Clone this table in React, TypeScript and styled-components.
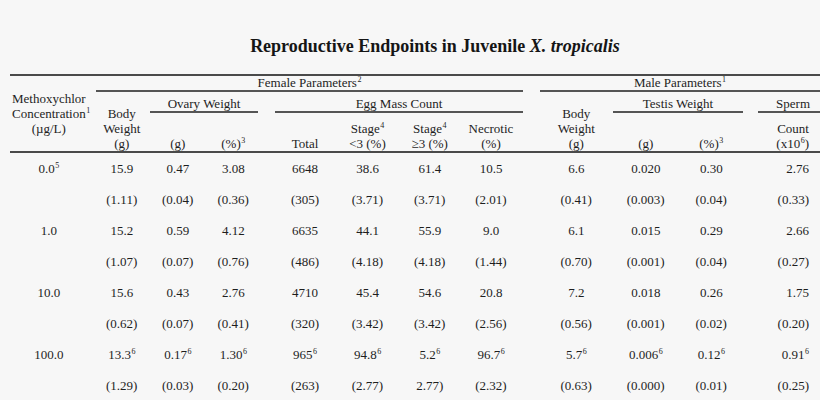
import React from "react";
import styled, { createGlobalStyle } from "styled-components";

const GlobalStyle = createGlobalStyle`
  html, body {
    margin: 0;
    padding: 0;
    background: #f7f7f7;
    overflow: hidden;
  }
  body {
    font-family: "Liberation Serif", "Times New Roman", serif;
    color: #1e1e1e;
  }
`;

const TRACKS =
  "75.5px 64.5px 55.5px 63.5px 67px 63px 61.5px 73px 77.5px 67.5px 73.5px 68px";

// per-column horizontal shift of the centred text (px); last column is right-aligned
const SHIFTS = [1, 4, 0, -4, 2.5, 0, 0, -6, 4, 1, -4, 0];

const Page = styled.div`
  width: 820px;
  height: 400px;
  padding-top: 35px;
  box-sizing: border-box;
`;

const Title = styled.h1`
  margin: 0;
  padding-left: 50px;
  font-size: 18px;
  line-height: 22px;
  font-weight: bold;
  text-align: center;
  color: #151515;
`;

const Italic = styled.i`
  font-style: italic;
`;

const Table = styled.div`
  margin: 17px 0 0 10px;
  font-size: 13px;
`;

const HeaderGrid = styled.div`
  display: grid;
  grid-template-columns: ${TRACKS};
  grid-template-rows: 16px 21px 38px;
  border-top: 2px solid #4a4a4a;
  border-bottom: 2px solid #4a4a4a;
`;

const Sup = styled.sup`
  font-size: 8px;
  line-height: 0;
  vertical-align: 5px;
  margin-left: 0.5px;
`;

const Concentration = styled.div`
  grid-column: 1;
  grid-row: 1 / 4;
  align-self: center;
  text-align: center;
  line-height: 15px;
  padding-left: 2px;
`;

const GroupHead = styled.div<{
  $col: string;
  $row: number;
  $ml?: number;
  $mr?: number;
  $right?: boolean;
}>`
  grid-column: ${(p) => p.$col};
  grid-row: ${(p) => p.$row};
  align-self: end;
  margin-left: ${(p) => p.$ml ?? 0}px;
  margin-right: ${(p) => p.$mr ?? 0}px;
  line-height: 14px;
  height: 14px;
  border-bottom: 2px solid #555;
  text-align: ${(p) => (p.$right ? "right" : "center")};
  padding-right: ${(p) => (p.$right ? 10 : 0)}px;
  white-space: nowrap;
`;

const SubHead = styled.div<{ $col: number; $span?: boolean; $shift: number; $right?: boolean }>`
  grid-column: ${(p) => p.$col};
  grid-row: ${(p) => (p.$span ? "2 / 4" : "3")};
  align-self: end;
  line-height: 15px;
  white-space: nowrap;
  text-align: ${(p) => (p.$right ? "right" : "center")};
  padding-left: ${(p) => (p.$shift > 0 ? p.$shift * 2 : 0)}px;
  padding-right: ${(p) => (p.$right ? 11 : p.$shift < 0 ? -p.$shift * 2 : 0)}px;
`;

const BodyGrid = styled.div`
  display: grid;
  grid-template-columns: ${TRACKS};
  grid-auto-rows: 31px;
`;

const Cell = styled.div<{ $shift: number; $right?: boolean }>`
  line-height: 31px;
  white-space: nowrap;
  text-align: ${(p) => (p.$right ? "right" : "center")};
  padding-left: ${(p) => (p.$shift > 0 ? p.$shift * 2 : 0)}px;
  padding-right: ${(p) => (p.$right ? 11 : p.$shift < 0 ? -p.$shift * 2 : 0)}px;
`;

type Val = string | [string, string];

const ROWS: Val[][] = [
  [["0.0", "5"], "15.9", "0.47", "3.08", "6648", "38.6", "61.4", "10.5", "6.6", "0.020", "0.30", "2.76"],
  ["", "(1.11)", "(0.04)", "(0.36)", "(305)", "(3.71)", "(3.71)", "(2.01)", "(0.41)", "(0.003)", "(0.04)", "(0.33)"],
  ["1.0", "15.2", "0.59", "4.12", "6635", "44.1", "55.9", "9.0", "6.1", "0.015", "0.29", "2.66"],
  ["", "(1.07)", "(0.07)", "(0.76)", "(486)", "(4.18)", "(4.18)", "(1.44)", "(0.70)", "(0.001)", "(0.04)", "(0.27)"],
  ["10.0", "15.6", "0.43", "2.76", "4710", "45.4", "54.6", "20.8", "7.2", "0.018", "0.26", "1.75"],
  ["", "(0.62)", "(0.07)", "(0.41)", "(320)", "(3.42)", "(3.42)", "(2.56)", "(0.56)", "(0.001)", "(0.02)", "(0.20)"],
  [
    "100.0",
    ["13.3", "6"],
    ["0.17", "6"],
    ["1.30", "6"],
    ["965", "6"],
    ["94.8", "6"],
    ["5.2", "6"],
    ["96.7", "6"],
    ["5.7", "6"],
    ["0.006", "6"],
    ["0.12", "6"],
    ["0.91", "6"],
  ],
  ["", "(1.29)", "(0.03)", "(0.20)", "(263)", "(2.77)", "2.77)", "(2.32)", "(0.63)", "(0.000)", "(0.01)", "(0.25)"],
];

const renderVal = (v: Val) =>
  Array.isArray(v) ? (
    <>
      {v[0]}
      <Sup>{v[1]}</Sup>
    </>
  ) : (
    v
  );

type Sub = { col: number; lines: React.ReactNode[]; span?: boolean };

const SUBS: Sub[] = [
  { col: 2, span: true, lines: ["Body", "Weight", "(g)"] },
  { col: 3, lines: ["(g)"] },
  { col: 4, lines: [<>(%)<Sup>3</Sup></>] },
  { col: 5, lines: ["Total"] },
  { col: 6, lines: [<>Stage<Sup>4</Sup></>, "<3 (%)"] },
  { col: 7, lines: [<>Stage<Sup>4</Sup></>, "≥3 (%)"] },
  { col: 8, lines: ["Necrotic", "(%)"] },
  { col: 9, span: true, lines: ["Body", "Weight", "(g)"] },
  { col: 10, lines: ["(g)"] },
  { col: 11, lines: [<>(%)<Sup>3</Sup></>] },
  { col: 12, lines: ["Count", <>(x10<Sup>6</Sup>)</>] },
];

const Line = styled.div``;

export default function App() {
  return (
    <>
      <GlobalStyle />
      <Page>
        <Title>
          Reproductive Endpoints in Juvenile <Italic>X. tropicalis</Italic>
        </Title>
        <Table>
          <HeaderGrid>
            <Concentration>
              <Line>Methoxychlor</Line>
              <Line>
                Concentration<Sup>1</Sup>
              </Line>
              <Line>(µg/L)</Line>
            </Concentration>
            <GroupHead $col="2 / 9" $row={1} $ml={10.5} $mr={10.5}>
              Female Parameters<Sup>2</Sup>
            </GroupHead>
            <GroupHead $col="9 / 13" $row={1} $ml={6.5}>
              Male Parameters<Sup>1</Sup>
            </GroupHead>
            <GroupHead $col="3 / 5" $row={2} $mr={11}>
              Ovary Weight
            </GroupHead>
            <GroupHead $col="5 / 9" $row={2} $ml={6} $mr={10.5}>
              Egg Mass Count
            </GroupHead>
            <GroupHead $col="10 / 12" $row={2} $ml={2} $mr={9}>
              Testis Weight
            </GroupHead>
            <GroupHead $col="12 / 13" $row={2} $ml={6} $right>
              Sperm
            </GroupHead>
            {SUBS.map((s) => (
              <SubHead
                key={s.col}
                $col={s.col}
                $span={s.span}
                $shift={SHIFTS[s.col - 1]}
                $right={s.col === 12}
              >
                {s.lines.map((l, i) => (
                  <Line key={i}>{l}</Line>
                ))}
              </SubHead>
            ))}
          </HeaderGrid>
          <BodyGrid>
            {ROWS.map((row, r) =>
              row.map((v, c) => (
                <Cell key={`${r}-${c}`} $shift={SHIFTS[c]} $right={c === 11}>
                  {renderVal(v)}
                </Cell>
              ))
            )}
          </BodyGrid>
        </Table>
      </Page>
    </>
  );
}
